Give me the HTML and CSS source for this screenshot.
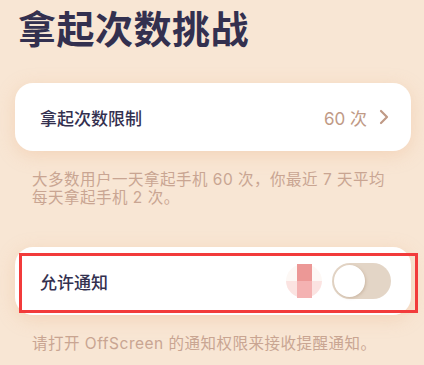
FILE: index.html
```html
<!DOCTYPE html>
<html lang="zh-CN">
<head>
  <meta charset="UTF-8">
  <meta name="viewport" content="width=device-width, initial-scale=1.0">
  <title>拿起次数挑战</title>
  <link rel="stylesheet" href="styles.css">
</head>
<body>
  <div class="page">
    <h1 class="title">拿起次数挑战</h1>

    <!-- 次数限制 -->
    <div class="card">
      <span class="label">拿起次数限制</span>
      <span class="value">60 次
        <svg class="chevron" width="10" height="16" viewBox="0 0 10 16">
          <path d="M2 2 L8 8 L2 14" fill="none" stroke="#c09a86" stroke-width="2.2" stroke-linecap="round" stroke-linejoin="round"/>
        </svg>
      </span>
    </div>
    <p class="note">大多数用户一天拿起手机 60 次，你最近 7 天平均每天拿起手机 2 次。</p>

    <!-- 通知 -->
    <div class="card card-notify">
      <span class="label">允许通知</span>
      <div class="controls">
        <div class="ripple">
          <div class="ripple-bar"></div>
        </div>
        <div class="switch"><div class="knob"></div></div>
      </div>
      <div class="highlight"></div>
    </div>
    <p class="note">请打开 OffScreen 的通知权限来接收提醒通知。</p>
  </div>
</body>
</html>
```

FILE: styles.css
```css
body {
  margin: 0;
  background-color: #f8e6d4;
  font-family: "Inter", "Noto Sans CJK SC", sans-serif;
  color: #33304f;
}
.page {
  padding: 0 13px 0 15px;
}
.title {
  margin: 0;
  padding: 4px 0 0 3px;
  font-family: "Noto Sans CJK SC", sans-serif;
  font-size: 38px;
  line-height: 46px;
  font-weight: 700;
  letter-spacing: 0.5px;
}
.card {
  margin-top: 33px;
  height: 68px;
  display: flex;
  align-items: center;
  justify-content: space-between;
  padding: 0 22px 0 25px;
  background: white;
  border-radius: 18px;
  box-shadow: 0 4px 18px rgba(236, 178, 136, 0.35);
}
.label {
  font-size: 17px;
  font-weight: 500;
}
.value {
  display: flex;
  align-items: center;
  gap: 12px;
  font-size: 17px;
  color: #c09a86;
}
.note {
  margin: 20px 0 0;
  padding: 0 20px 0 17px;
  font-size: 15.5px;
  line-height: 18px;
  letter-spacing: 0.5px;
  color: #c9a592;
}
.card-notify {
  position: relative;
  margin-top: 40px;
  padding-right: 20px;
}
.controls {
  display: flex;
  align-items: center;
  gap: 10px;
}
.ripple {
  width: 36px;
  height: 34px;
  border-radius: 50%;
  background: linear-gradient(#fdf8f5 50%, #fbe3e1 50%);
  display: flex;
  justify-content: center;
}
.ripple-bar {
  width: 15px;
  height: 100%;
  background: linear-gradient(#ec9896 50%, #f4b2b2 50%);
}
.switch {
  width: 59px;
  height: 36px;
  border-radius: 18px;
  background: #e3d5c6;
  padding: 2px;
  box-sizing: border-box;
}
.knob {
  width: 31px;
  height: 32px;
  border-radius: 50%;
  background: white;
  box-shadow: 1px 1px 3px rgba(160, 130, 100, 0.35);
}
.highlight {
  position: absolute;
  left: 4px;
  top: 6px;
  width: 399px;
  height: 60px;
  border: 3px solid #f23b3b;
  box-sizing: border-box;
  pointer-events: none;
}
```
